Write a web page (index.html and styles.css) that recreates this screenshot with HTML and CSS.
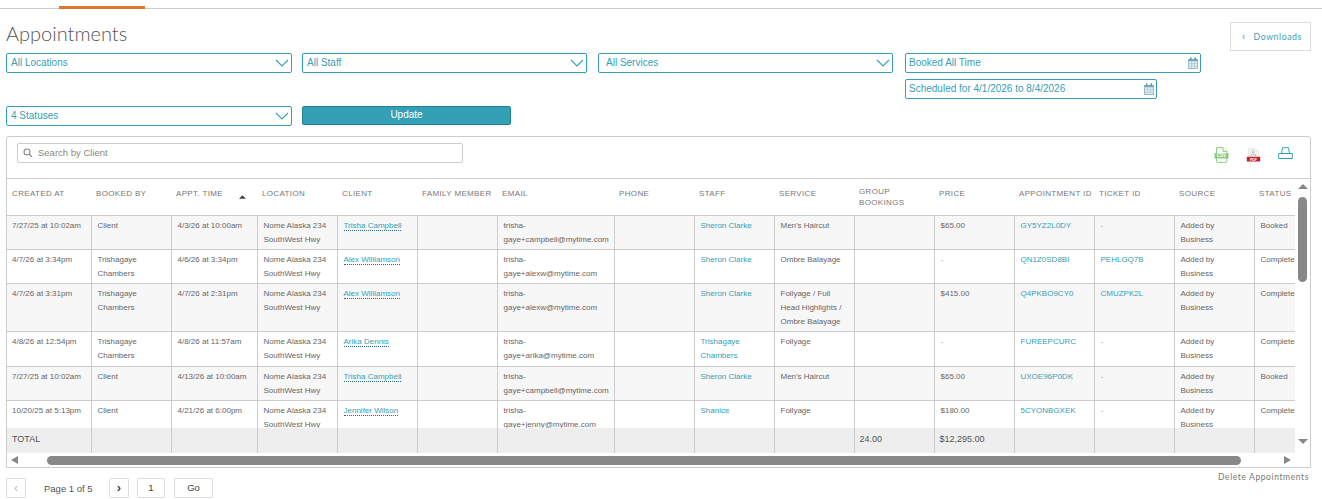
FILE: index.html
```html
<!DOCTYPE html>
<html lang="en">
<head>
  <meta charset="UTF-8" />
  <title>Appointments</title>
  <link rel="stylesheet" href="styles.css">
</head>
<body>
  <div class="top-bar"><div class="top-tab"></div></div>

  <div class="page">
    <div class="title-row">
      <h1>Appointments</h1>
      <div class="downloads-btn"><span class="downloads-caret">‹</span> Downloads</div>
    </div>

    <div class="filter-row">
      <div class="select select-location">All Locations
        <svg class="chevron" viewBox="0 0 14 8"><path d="M1 1l6 6 6-6" /></svg>
      </div>
      <div class="select select-staff">All Staff
        <svg class="chevron" viewBox="0 0 14 8"><path d="M1 1l6 6 6-6" /></svg>
      </div>
      <div class="select select-services">All Services
        <svg class="chevron" viewBox="0 0 14 8"><path d="M1 1l6 6 6-6" /></svg>
      </div>
      <div class="date-stack">
        <div class="date-input date-booked">Booked All Time
          <svg class="calendar" viewBox="0 0 10 12"><rect x="0.5" y="2.5" width="9" height="9" fill="#dfecef" stroke="#9bbcc6" /><rect x="0.5" y="2" width="9" height="2.2" fill="#74aab8" /><rect x="2" y="0.3" width="1.5" height="2.700" fill="#5d9bab" /><rect x="6.500" y="0.3" width="1.500" height="2.700" fill="#5d9bab" /><path d="M0.500 6.500h9M0.500 9h9M3.500 4.200v7M6.500 4.200v7" stroke="#a9c6ce" stroke-width="0.600" /></svg>
        </div>
        <div class="date-input date-scheduled">Scheduled for 4/1/2026 to 8/4/2026
          <svg class="calendar" viewBox="0 0 10 12"><rect x="0.5" y="2.5" width="9" height="9" fill="#dfecef" stroke="#9bbcc6" /><rect x="0.5" y="2" width="9" height="2.2" fill="#74aab8" /><rect x="2" y="0.3" width="1.5" height="2.700" fill="#5d9bab" /><rect x="6.500" y="0.3" width="1.500" height="2.700" fill="#5d9bab" /><path d="M0.500 6.500h9M0.500 9h9M3.500 4.200v7M6.500 4.200v7" stroke="#a9c6ce" stroke-width="0.600" /></svg>
        </div>
      </div>
    </div>

    <div class="filter-row filter-row-second">
      <div class="select select-location">4 Statuses
        <svg class="chevron" viewBox="0 0 14 8"><path d="M1 1l6 6 6-6" /></svg>
      </div>
      <div class="update-btn">Update</div>
    </div>

    <div class="card">
      <div class="card-toolbar">
        <div class="search-box">
          <svg class="search-icon" viewBox="0 0 10 10"><circle cx="4" cy="4" r="3" /><path d="M6.200 6.200L9 9" /></svg>
          Search by Client
        </div>
        <div class="export-icons">
          <svg class="icon-csv" viewBox="0 0 15 16"><path class="csv-page" d="M2.500 0.600h6.500l3.800 3.800v10a1 1 0 0 1-1 1H3.500a1 1 0 0 1-1-1z" /><path class="csv-page" d="M9 0.600v3.800h3.800" /><rect x="0.500" y="6" width="14" height="5.500" fill="#8ccb7e" /><text x="7.500" y="10.300" class="csv-label">CSV</text></svg>
          <svg class="icon-pdf" viewBox="0 0 15 14"><path d="M2.500 0.300h6.500l3.500 3.500v5.700H2.500z" fill="#f2f2f2" stroke="#ddd" stroke-width="0.500" /><path d="M7.200 2c0 2.500-1.500 4.500-3 5.800 1.800-.9 4.200-1.200 6-.3-1.800-1-3-3-3-5.500z" fill="none" stroke="#b5b5b5" stroke-width="0.700" /><rect x="0.800" y="8.800" width="13.400" height="4.700" fill="#c8202a" /><text x="7.500" y="12.600" class="pdf-label">PDF</text></svg>
          <svg class="icon-print" viewBox="0 0 15 12"><path d="M3.500 6.500l1-5.800h6l1 5.800" /><path d="M0.700 6.500h13.600v5H0.700z" /></svg>
        </div>
      </div>

      <div class="table-area">
        <div class="table-main">
          <table class="grid grid-head">
            <colgroup><col><col><col><col><col><col><col><col><col><col><col><col><col><col><col><col></colgroup>
            <tr>
              <th>Created At</th>
              <th>Booked By</th>
              <th>Appt. Time <svg class="sort-arrow" viewBox="0 0 8 4"><path d="M0 4L4 0l4 4z" /></svg></th>
              <th>Location</th>
              <th>Client</th>
              <th>Family Member</th>
              <th>Email</th>
              <th>Phone</th>
              <th>Staff</th>
              <th>Service</th>
              <th class="two-line">Group<br>Bookings</th>
              <th>Price</th>
              <th>Appointment ID</th>
              <th>Ticket ID</th>
              <th>Source</th>
              <th>Status</th>
            </tr>
          </table>

          <div class="rows-clip">
            <table class="grid grid-rows">
              <colgroup><col><col><col><col><col><col><col><col><col><col><col><col><col><col><col><col></colgroup>
              <tr>
                <td>7/27/25 at 10:02am</td><td>Client</td><td>4/3/26 at 10:00am</td><td>Nome Alaska 234 SouthWest Hwy</td>
                <td><a class="client-link">Trisha Campbell</a></td><td></td><td>trisha-gaye+campbell@mytime.com</td><td></td>
                <td class="link">Sheron Clarke</td><td>Men's Haircut</td><td></td><td>$65.00</td>
                <td class="link">GY5YZ2L0DY</td><td class="muted">-</td><td>Added by Business</td><td>Booked</td>
              </tr>
              <tr>
                <td>4/7/26 at 3:34pm</td><td>Trishagaye Chambers</td><td>4/6/26 at 3:34pm</td><td>Nome Alaska 234 SouthWest Hwy</td>
                <td><a class="client-link">Alex Williamson</a></td><td></td><td>trisha-gaye+alexw@mytime.com</td><td></td>
                <td class="link">Sheron Clarke</td><td>Ombre Balayage</td><td></td><td class="muted">-</td>
                <td class="link">QN1Z0SD8BI</td><td class="link">PEHLGQ7B</td><td>Added by Business</td><td>Completed</td>
              </tr>
              <tr>
                <td>4/7/26 at 3:31pm</td><td>Trishagaye Chambers</td><td>4/7/26 at 2:31pm</td><td>Nome Alaska 234 SouthWest Hwy</td>
                <td><a class="client-link">Alex Williamson</a></td><td></td><td>trisha-gaye+alexw@mytime.com</td><td></td>
                <td class="link">Sheron Clarke</td><td>Foilyage / Full Head Highlights / Ombre Balayage</td><td></td><td>$415.00</td>
                <td class="link">Q4PKBO9CY0</td><td class="link">CMUZPK2L</td><td>Added by Business</td><td>Completed</td>
              </tr>
              <tr>
                <td>4/8/26 at 12:54pm</td><td>Trishagaye Chambers</td><td>4/8/26 at 11:57am</td><td>Nome Alaska 234 SouthWest Hwy</td>
                <td><a class="client-link">Arika Dennis</a></td><td></td><td>trisha-gaye+arika@mytime.com</td><td></td>
                <td class="link">Trishagaye Chambers</td><td>Foilyage</td><td></td><td class="muted">-</td>
                <td class="link">FUREEPCURC</td><td class="muted">-</td><td>Added by Business</td><td>Completed</td>
              </tr>
              <tr>
                <td>7/27/25 at 10:02am</td><td>Client</td><td>4/13/26 at 10:00am</td><td>Nome Alaska 234 SouthWest Hwy</td>
                <td><a class="client-link">Trisha Campbell</a></td><td></td><td>trisha-gaye+campbell@mytime.com</td><td></td>
                <td class="link">Sheron Clarke</td><td>Men's Haircut</td><td></td><td>$65.00</td>
                <td class="link">UXOE96P0DK</td><td class="muted">-</td><td>Added by Business</td><td>Booked</td>
              </tr>
              <tr>
                <td>10/20/25 at 5:13pm</td><td>Client</td><td>4/21/26 at 6:00pm</td><td>Nome Alaska 234 SouthWest Hwy</td>
                <td><a class="client-link">Jennifer Wilson</a></td><td></td><td>trisha-gaye+jenny@mytime.com</td><td></td>
                <td class="link">Shanice</td><td>Foilyage</td><td></td><td>$180.00</td>
                <td class="link">5CYONBGXEK</td><td class="muted">-</td><td>Added by Business</td><td>Completed</td>
              </tr>
            </table>
          </div>

          <table class="grid grid-total">
            <colgroup><col><col><col><col><col><col><col><col><col><col><col><col><col><col><col><col></colgroup>
            <tr>
              <td>TOTAL</td><td></td><td></td><td></td><td></td><td></td><td></td><td></td><td></td><td></td>
              <td>24.00</td><td>$12,295.00</td><td></td><td></td><td></td><td></td>
            </tr>
          </table>

          <div class="hbar">
            <span class="arrow arrow-left"></span>
            <div class="hbar-thumb"></div>
            <span class="arrow arrow-right"></span>
          </div>
        </div>

        <div class="vbar">
          <span class="arrow arrow-up"></span>
          <div class="vbar-thumb"></div>
          <span class="arrow arrow-down"></span>
        </div>
      </div>
    </div>

    <div class="footer-row">
      <div class="pager">
        <div class="pager-btn pager-prev">‹</div>
        <div class="pager-label">Page 1 of 5</div>
        <div class="pager-btn pager-next">›</div>
        <div class="pager-btn pager-num">1</div>
        <div class="pager-btn pager-go">Go</div>
      </div>
      <div class="delete-link">Delete Appointments</div>
    </div>
  </div>
</body>
</html>
```

FILE: styles.css
```css
* {
  box-sizing: border-box;
}

body {
  margin: 0;
  background: #fff;
  font-family: "Liberation Sans", Arial, sans-serif;
  color: #666;
  overflow: hidden;
}

.top-bar {
  height: 9px;
  padding: 6px 0 0 59px;
  border-bottom: 1px solid #ccc;
}

.top-tab {
  width: 86px;
  height: 3px;
  background: #e0762b;
}

.page {
  padding: 0 11px 0 6px;
}

/* title */
.title-row {
  display: flex;
  justify-content: space-between;
  height: 44px;
  padding-top: 13px;
}

.title-row h1 {
  margin: -1px 0 0;
  font-family: Lato, sans-serif;
  font-weight: 300;
  font-size: 20px;
  line-height: 24px;
  color: #555;
}

.downloads-btn {
  width: 81px;
  height: 29px;
  border: 1px solid #ddd;
  font-family: Lato, sans-serif;
  font-size: 8.7px;
  letter-spacing: 0.6px;
  line-height: 26px;
  color: #35a0b5;
  padding-left: 11px;
}

.downloads-caret {
  font-size: 11px;
  margin-right: 5px;
}

/* filters */
.filter-row {
  display: flex;
  align-items: flex-start;
}

.filter-row-second {
  margin-top: 7px;
}

.select,
.date-input {
  height: 20px;
  border: 1px solid #35a0b5;
  border-radius: 2px;
  font-size: 10px;
  line-height: 18px;
  color: #35a0b5;
  padding-left: 4px;
  display: flex;
  justify-content: space-between;
  align-items: center;
  background: #fff;
}

.select {
  padding-right: 2px;
}

.select-location {
  width: 286px;
  margin-right: 10px;
}

.select-staff {
  width: 285px;
  margin-right: 11px;
  box-shadow: 0 0 3px rgba(0, 0, 0, 0.15);
}

.select-services {
  width: 295px;
  margin-right: 12px;
  padding-left: 7px;
}

.chevron {
  width: 14px;
  height: 8px;
  fill: none;
  stroke: #35a0b5;
  stroke-width: 1.1;
}

.date-stack {
  display: flex;
  flex-direction: column;
  gap: 6px;
}

.date-input {
  padding-right: 2px;
  padding-left: 3px;
}

.date-booked {
  width: 296px;
}

.date-scheduled {
  width: 252px;
}

.calendar {
  width: 10px;
  height: 12px;
}

.update-btn {
  width: 209px;
  height: 19px;
  background: #33a0b5;
  border: 1px solid #24808f;
  border-radius: 2px;
  color: #fff;
  font-size: 10px;
  line-height: 16px;
  text-align: center;
}

/* card */
.card {
  margin-top: 10px;
  border: 1px solid #ccc;
  border-radius: 3px 3px 0 0;
  height: 332px;
  display: flex;
  flex-direction: column;
  overflow: hidden;
}

.card-toolbar {
  height: 42px;
  flex: none;
  border-bottom: 1px solid #ccc;
  display: flex;
  justify-content: space-between;
  padding: 6px 17px 0 10px;
}

.search-box {
  width: 446px;
  height: 20px;
  border: 1px solid #ccc;
  border-radius: 2px;
  font-size: 9.5px;
  line-height: 18px;
  color: #888;
  padding-left: 5px;
  display: flex;
  align-items: center;
  gap: 5px;
}

.search-icon {
  width: 10px;
  height: 10px;
  fill: none;
  stroke: #888;
  stroke-width: 1.1;
}

.export-icons {
  display: flex;
  gap: 17px;
  padding-top: 4px;
}

.icon-csv {
  width: 15px;
  height: 16px;
}

.icon-pdf {
  width: 15px;
  height: 14px;
  margin-top: 1px;
}

.icon-print {
  width: 15px;
  height: 12px;
  fill: none;
  stroke: #35a0b5;
  stroke-width: 1;
}

.csv-page {
  fill: #fff;
  stroke: #8ccb7e;
  stroke-width: 1;
}

.csv-label,
.pdf-label {
  font-family: "Liberation Sans", sans-serif;
  font-weight: bold;
  fill: #fff;
  text-anchor: middle;
}

.csv-label {
  font-size: 4.5px;
}

.pdf-label {
  font-size: 3.5px;
}

/* table */
.table-area {
  flex: 1;
  display: flex;
  min-height: 0;
}

.table-main {
  width: 1288px;
  flex: none;
  overflow: hidden;
  display: flex;
  flex-direction: column;
}

.grid {
  table-layout: fixed;
  width: 1327px;
  border-collapse: collapse;
  flex: none;
}

.grid col { width: 80px; }
.grid col:nth-child(1) { width: 84px; }
.grid col:nth-child(3) { width: 86px; }
.grid col:nth-child(7) { width: 117px; }

.grid th {
  height: 36px;
  padding: 9px 0 0 5px;
  vertical-align: top;
  text-align: left;
  font-weight: normal;
  font-size: 8px;
  line-height: 11px;
  letter-spacing: 0.35px;
  text-transform: uppercase;
  color: #777;
  border-bottom: 1px solid #ccc;
  white-space: nowrap;
}

.grid th.two-line {
  padding-top: 7px;
}

.sort-arrow {
  width: 7px;
  height: 4px;
  fill: #444;
  margin-left: 13px;
  vertical-align: -3px;
}

.rows-clip {
  height: 212px;
  overflow: hidden;
  flex: none;
}

.grid-rows td {
  padding: 3px 5px 2.3px 6px;
  vertical-align: top;
  font-size: 8px;
  line-height: 14px;
  color: #666;
  border: 1px solid #ccc;
  border-top: 0;
  overflow: hidden;
  white-space: normal;
}

.grid-rows td:first-child {
  border-left: 0;
  padding-left: 5px;
}

.grid-rows tr:nth-child(odd) td {
  background: #f7f7f7;
}

.grid-rows .link {
  color: #35a0b5;
}

.grid-rows .muted {
  color: #aaa;
}

.client-link {
  color: #35a0b5;
  border-bottom: 1px dotted #1d6f80;
}

.grid-total td {
  height: 25px;
  background: #eee;
  border-left: 1px solid #ccc;
  padding: 0 0 2px 5px;
  font-size: 9px;
  color: #555;
}

.grid-total td:first-child {
  border-left: 0;
}

.arrow {
  display: block;
  width: 0;
  height: 0;
  flex: none;
  border-style: solid;
  border-color: transparent;
}

.arrow-left {
  border-width: 4px 7px 4px 0;
  border-right-color: #888;
}

.arrow-right {
  border-width: 4px 0 4px 7px;
  border-left-color: #888;
}

.arrow-up {
  border-width: 0 5px 5px;
  border-bottom-color: #888;
}

.arrow-down {
  border-width: 5px 5px 0;
  border-top-color: #888;
}

.hbar {
  height: 15px;
  flex: none;
  display: flex;
  align-items: center;
  padding-left: 4px;
}

.hbar-thumb {
  width: 1194px;
  height: 9px;
  margin-left: 29px;
  margin-right: 43px;
  background: #888;
  border-radius: 5px;
}

.vbar {
  width: 15px;
  flex: none;
  display: flex;
  flex-direction: column;
  align-items: center;
  padding-top: 5px;
}

.vbar-thumb {
  width: 9px;
  height: 85px;
  margin-top: 8px;
  margin-bottom: 157px;
  background: #888;
  border-radius: 5px;
}

/* pager */
.footer-row {
  display: flex;
  justify-content: space-between;
  align-items: flex-start;
  margin-top: 4px;
}

.pager {
  display: flex;
  align-items: center;
  margin-top: 6px;
}

.pager-btn {
  height: 20px;
  border: 1px solid #ddd;
  border-radius: 2px;
  font-size: 9.5px;
  line-height: 18px;
  text-align: center;
  color: #444;
}

.pager-prev {
  width: 20px;
  color: #bbb;
  font-size: 12px;
}

.pager-next {
  width: 20px;
  font-size: 13px;
  font-weight: bold;
}

.pager-num {
  width: 28px;
  margin-left: 8px;
}

.pager-go {
  width: 39px;
  margin-left: 9px;
}

.pager-label {
  width: 83px;
  padding-left: 18px;
  font-size: 9.5px;
  color: #555;
}

.delete-link {
  font-family: Lato, sans-serif;
  font-size: 8.5px;
  letter-spacing: 0.6px;
  line-height: 10px;
  color: #777;
  padding-right: 2px;
}
```
